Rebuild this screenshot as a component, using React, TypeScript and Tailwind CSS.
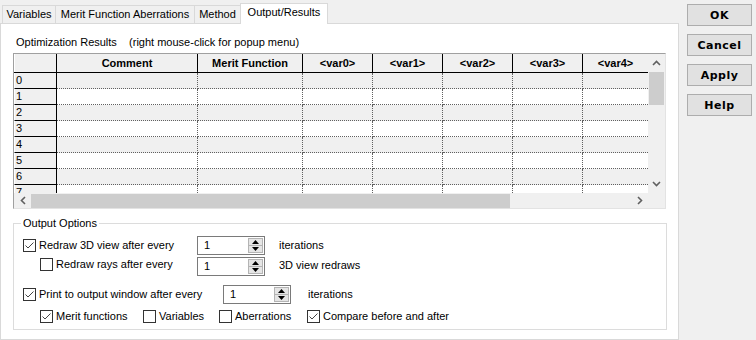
import React from "react";

const headerCols: { w: string; label: string; border: boolean }[] = [
  { w: "w-[141px]", label: "Comment", border: true },
  { w: "w-[105px]", label: "Merit Function", border: true },
  { w: "w-[70px]", label: "<var0>", border: true },
  { w: "w-[70px]", label: "<var1>", border: true },
  { w: "w-[70px]", label: "<var2>", border: true },
  { w: "w-[70px]", label: "<var3>", border: true },
  { w: "w-[65px]", label: "<var4>", border: false },
];

function UpChev() {
  return (
    <svg width="9" height="6" viewBox="0 0 9 6">
      <polyline points="1,5 4.5,1.5 8,5" fill="none" stroke="#606060" strokeWidth="1.6" />
    </svg>
  );
}
function DownChev() {
  return (
    <svg width="9" height="6" viewBox="0 0 9 6">
      <polyline points="1,1 4.5,4.5 8,1" fill="none" stroke="#606060" strokeWidth="1.6" />
    </svg>
  );
}
function LeftChev() {
  return (
    <svg width="6" height="9" viewBox="0 0 6 9">
      <polyline points="5,1 1.5,4.5 5,8" fill="none" stroke="#606060" strokeWidth="1.6" />
    </svg>
  );
}
function RightChev() {
  return (
    <svg width="6" height="9" viewBox="0 0 6 9">
      <polyline points="1,1 4.5,4.5 1,8" fill="none" stroke="#606060" strokeWidth="1.6" />
    </svg>
  );
}

function Check({ checked }: { checked?: boolean }) {
  return (
    <span className="w-[13px] h-[13px] border border-[#333333] bg-white flex items-center justify-center shrink-0">
      {checked && (
        <svg width="11" height="11" viewBox="0 0 11 11">
          <polyline points="1.5,5.5 4,8 9.5,2.5" fill="none" stroke="#444444" strokeWidth="1" />
        </svg>
      )}
    </span>
  );
}

function Spin() {
  return (
    <div className="h-[19px] w-[68px] border border-[#7a7a7a] bg-white flex shrink-0">
      <div className="flex-1 pl-[6px] flex items-center">1</div>
      <div className="w-[16px] flex flex-col py-px pr-px">
        <div className="flex-1 bg-[#e5e5e5] border border-[#b4b4b4] flex items-center justify-center">
          <svg width="7" height="4" viewBox="0 0 7 4">
            <polygon points="0,4 3.5,0 7,4" fill="#000000" />
          </svg>
        </div>
        <div className="flex-1 bg-[#e5e5e5] border border-t-0 border-[#b4b4b4] flex items-center justify-center">
          <svg width="7" height="4" viewBox="0 0 7 4">
            <polygon points="0,0 7,0 3.5,4" fill="#000000" />
          </svg>
        </div>
      </div>
    </div>
  );
}

function Btn({ label }: { label: string }) {
  return (
    <div className="w-[65px] h-[22px] bg-[#e1e1e1] border border-[#adadad] flex items-center justify-center font-['DejaVu_Sans',sans-serif] font-bold text-[11px] tracking-[0.5px]">
      {label}
    </div>
  );
}

export default function App() {
  const rows = [0, 1, 2, 3, 4, 5, 6, 7];
  return (
    <div className="w-[756px] h-[340px] bg-[#f0f0f0] flex font-['Liberation_Sans',Arial,sans-serif] text-[11px] leading-[13px] text-black overflow-hidden">
      {/* Tab control */}
      <div className="w-[680px] flex flex-col">
        <div className="h-[23px] flex items-end pl-[2px]">
          <div className="w-[53px] h-[18px] border-l border-t border-[#d9d9d9] flex items-center justify-center">Variables</div>
          <div className="w-[139px] h-[18px] border-l border-t border-[#d9d9d9] flex items-center justify-center">Merit Function Aberrations</div>
          <div className="w-[46px] h-[18px] border-l border-t border-[#d9d9d9] flex items-center justify-center">Method</div>
          <div className="relative z-10 w-[88px] h-[21px] -mb-px bg-white border-l border-t border-r border-[#d9d9d9] flex items-center justify-center pb-[3px]">Output/Results</div>
        </div>
        <div className="flex-1 w-[679px] bg-white border border-[#d9d9d9] pl-[12px]">
          <div className="mt-[12px] pl-[3px] whitespace-pre">Optimization Results    (right mouse-click for popup menu)</div>

          {/* Grid */}
          <div className="mt-[4px] w-[653px] border border-t-[#a0a0a0] border-l-[#a0a0a0] border-r-[#e3e3e3] border-b-[#e3e3e3] bg-[#f0f0f0]">
            <div className="flex">
              <div className="w-[634px] h-[139px] overflow-hidden">
                {/* header */}
                <div className="flex h-[19px] border-b border-black bg-[#f0f0f0] font-bold">
                  <div className="w-[43px] border-r border-black border-l border-l-white" />
                  {headerCols.map((c) => (
                    <div
                      key={c.label}
                      className={`${c.w} ${c.border ? "border-r border-black" : ""} flex items-center justify-center`}
                    >
                      {c.label}
                    </div>
                  ))}
                </div>
                {rows.map((r) => (
                  <div key={r} className={`flex h-[16px] ${r % 2 === 0 ? "bg-[#f0f0f0]" : "bg-white"}`}>
                    <div className="w-[43px] bg-[#f0f0f0] border-l border-l-white border-r border-r-black border-b border-b-black pl-[1px] flex items-center">
                      {r}
                    </div>
                    {headerCols.map((c) => (
                      <div
                        key={c.label}
                        className={`${c.w} border-b border-dotted border-b-[#606060] ${c.border ? "border-r border-r-[#606060]" : ""}`}
                      />
                    ))}
                  </div>
                ))}
              </div>
              {/* vertical scrollbar */}
              <div className="w-[17px] h-[139px] bg-[#f0f0f0] flex flex-col">
                <div className="h-[18px] flex items-center justify-center">
                  <UpChev />
                </div>
                <div className="flex-1 px-px">
                  <div className="h-[33px] bg-[#cdcdcd]" />
                </div>
                <div className="h-[18px] flex items-center justify-center">
                  <DownChev />
                </div>
              </div>
            </div>
            {/* horizontal scrollbar */}
            <div className="flex h-[15px]">
              <div className="w-[634px] flex bg-[#f0f0f0]">
                <div className="w-[17px] flex items-center justify-center">
                  <LeftChev />
                </div>
                <div className="flex-1 pt-px">
                  <div className="w-[479px] h-[14px] bg-[#cdcdcd]" />
                </div>
                <div className="w-[17px] flex items-center justify-center">
                  <RightChev />
                </div>
              </div>
              <div className="w-[17px] bg-[#f0f0f0]" />
            </div>
          </div>

          {/* Output Options */}
          <div className="relative mt-[14px] w-[654px] h-[107px] border border-[#dcdcdc]">
            <span className="absolute left-[7px] -top-[7px] bg-white px-[2px]">Output Options</span>
            <div className="pt-[12px] flex flex-col">
              <div className="flex items-center h-[19px]">
                <div className="w-[183px] pl-[9px] flex items-center gap-[3px]">
                  <Check checked />
                  <span>Redraw 3D view after every</span>
                </div>
                <Spin />
                <span className="ml-[14px]">iterations</span>
              </div>
              <div className="flex items-center h-[19px] mt-[2px]">
                <div className="w-[183px] pl-[26px] flex items-center gap-[3px] mb-[4px]">
                  <Check />
                  <span>Redraw rays after every</span>
                </div>
                <Spin />
                <span className="ml-[14px] mb-[2px]">3D view redraws</span>
              </div>
              <div className="flex items-center h-[19px] mt-[9px]">
                <div className="w-[209px] pl-[9px] flex items-center gap-[3px]">
                  <Check checked />
                  <span>Print to output window after every</span>
                </div>
                <Spin />
                <span className="ml-[17px]">iterations</span>
              </div>
              <div className="flex items-center h-[20px] mt-[2px] pl-[26px]">
                <div className="w-[103px] flex items-center gap-[3px]">
                  <Check checked />
                  <span>Merit functions</span>
                </div>
                <div className="w-[76px] flex items-center gap-[3px]">
                  <Check />
                  <span>Variables</span>
                </div>
                <div className="w-[88px] flex items-center gap-[3px]">
                  <Check />
                  <span>Aberrations</span>
                </div>
                <div className="flex items-center gap-[3px]">
                  <Check checked />
                  <span>Compare before and after</span>
                </div>
              </div>
            </div>
          </div>
        </div>
      </div>

      {/* Buttons */}
      <div className="pl-[7px] pt-[4px] flex flex-col gap-[8px]">
        <Btn label="OK" />
        <Btn label="Cancel" />
        <Btn label="Apply" />
        <Btn label="Help" />
      </div>
    </div>
  );
}
